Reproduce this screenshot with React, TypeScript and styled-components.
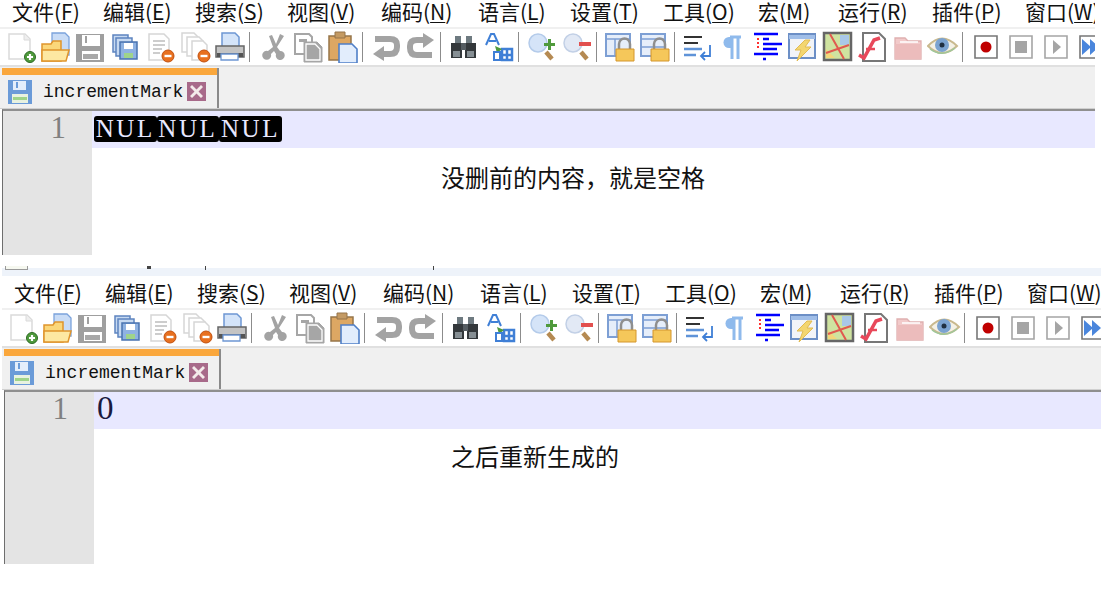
import React from "react";
import styled, { createGlobalStyle } from "styled-components";

const GlobalStyle = createGlobalStyle`
  html, body {
    margin: 0;
    padding: 0;
    background: #ffffff;
  }
  #root {
    width: 1101px;
    height: 597px;
    overflow: hidden;
  }
`;

const Shot = styled.div<{ $left: number; $top: number; $width: number }>`
  width: ${(p) => p.$width}px;
  margin-left: ${(p) => p.$left}px;
  margin-top: ${(p) => p.$top}px;
`;

const MenuBar = styled.div`
  display: flex;
  box-sizing: border-box;
  height: 27px;
  padding: 0 0 4px 12px;
  align-items: center;
  white-space: nowrap;
  overflow-x: clip;
  background: #ffffff;
  font-family: "Noto Sans CJK SC", "Liberation Sans", sans-serif;
  font-size: 21px;
  line-height: 25px;
  color: #111111;
`;

const MenuItem = styled.span<{ $width: number }>`
  flex: none;
  width: ${(p) => p.$width}px;

  u {
    text-underline-offset: 2px;
    text-decoration-thickness: 1px;
  }
`;

const Toolbar = styled.div`
  display: flex;
  align-items: center;
  height: 36px;
  padding-left: 2px;
  overflow: hidden;
  border-top: 2px solid #f0f0f0;
  background: #ffffff;
`;

const ToolSlot = styled.span`
  flex: none;
  width: 35px;
  height: 30px;
  display: flex;
  align-items: center;
  justify-content: center;
`;

const ToolSep = styled.span`
  flex: none;
  width: 1px;
  height: 30px;
  margin: 0 5px 0 2px;
  background: #8c8c8c;
`;

const TabBar = styled.div`
  display: flex;
  height: 44px;
  background: #f0f0f0;
  border-top: 2px solid #e0e0e0;
  border-bottom: 1px solid #d0d0d0;
  box-sizing: border-box;
  padding-left: 2px;
  padding-top: 1px;
`;

const Tab = styled.div`
  width: 215px;
  border-right: 2px solid #8a8a8a;
  background: #f0f0f0;
`;

const TabStripe = styled.div`
  height: 7px;
  background: #faa73c;
`;

const TabBody = styled.div`
  display: flex;
  align-items: center;
  height: 33px;
  padding-left: 6px;
`;

const TabLabel = styled.span`
  margin-left: 11px;
  width: 144px;
  font-family: "Liberation Mono", monospace;
  font-size: 18px;
  color: #111111;
  white-space: nowrap;
`;

const Editor = styled.div<{ $height: number }>`
  display: flex;
  height: ${(p) => p.$height}px;
  margin-left: 2px;
  box-sizing: border-box;
  border-top: 2px solid #8f8f8f;
  border-left: 1px solid #6e6e6e;
  background: #ffffff;
`;

const Gutter = styled.div`
  flex: none;
  box-sizing: border-box;
  width: 89px;
  padding: 0 26px 0 0;
  text-align: right;
  background: #e4e4e4;
  color: #808080;
  font-family: "Liberation Serif", serif;
  font-size: 31px;
  line-height: 34px;
`;

const Content = styled.div`
  flex: 1;
  min-width: 0;
  display: flex;
  flex-direction: column;
`;

const CurrentLine = styled.div`
  display: flex;
  align-items: center;
  height: 37px;
  padding-left: 2px;
  background: #e8e8ff;
`;

const NulChip = styled.span`
  box-sizing: border-box;
  width: 62.6px;
  height: 26px;
  margin-top: -2px;
  border-radius: 3px;
  background: #000000;
  color: #e8e8ff;
  font-family: "Liberation Serif", serif;
  font-size: 25px;
  letter-spacing: 2.6px;
  line-height: 25px;
  text-align: center;
`;

const Digit = styled.span`
  margin: -5px 0 0 1px;
  font-family: "Liberation Serif", serif;
  font-size: 33px;
  line-height: 34px;
  color: #1a1a40;
`;

const Caption = styled.div<{ $indent: number; $gap: number }>`
  margin-top: ${(p) => p.$gap}px;
  padding-left: ${(p) => p.$indent}px;
  font-family: "Noto Sans CJK SC", "Liberation Sans", sans-serif;
  font-size: 24px;
  line-height: 34px;
  color: #111111;
  white-space: nowrap;
`;

const Band = styled.div`
  margin: 13px 0 0 2px;
  height: 8px;
  background: #eef3fa;
`;

const Scrap = styled.svg`
  display: block;
  overflow: visible;
`;

const Ico = ({ children }: { children: React.ReactNode }) => (
  <svg width="32" height="32" viewBox="0 0 32 32">
    {children}
  </svg>
);

const icons: Record<string, React.ReactNode> = {
  new: (
    <>
      <path d="M5 3h16l5 5v20H5z" fill="#fff" stroke="#dadada" strokeWidth="1.5" />
      <path d="M20 3v6h6" fill="#eee" stroke="#dadada" />
      <circle cx="26" cy="26" r="5.500" fill="#4f9a3c" stroke="#2e6b25" />
      <path d="M26 23v6M23 26h6" stroke="#fff" strokeWidth="2.2" />
    </>
  ),
  open: (
    <>
      <path d="M13 2h13l4 4v18H13z" fill="#c9dcf6" stroke="#7ba3dc" strokeWidth="1.3" />
      <path d="M3 13h9l2-3h8v20H3z" fill="#fbd77a" stroke="#e0952c" strokeWidth="1.5" />
      <path d="M3 19h27l-3 11H3z" fill="#fde8a2" stroke="#e0952c" strokeWidth="1.5" />
    </>
  ),
  save: (
    <>
      <path d="M2 3h28v28H2z" fill="#9f9f9f" />
      <path d="M8 4h18v11H8z" fill="#ffffff" />
      <path d="M11 5h2v7h-2z" fill="#9f9f9f" />
      <path d="M8 20h18v9H8z" fill="#ffffff" />
      <path d="M9 23h15v5H9z" fill="#a8a8a8" />
    </>
  ),
  saveall: (
    <>
      <path d="M4 4h15v17H4z" fill="#c6d9f1" stroke="#5d84c0" strokeWidth="1.5" />
      <path d="M7 7h16v18H7z" fill="#c6d9f1" stroke="#5d84c0" strokeWidth="1.5" />
      <path d="M11 11h17v17H11z" fill="#8fb2e2" stroke="#4a73b0" strokeWidth="1.5" />
      <path d="M15 12h9v6h-9z" fill="#fff" />
      <path d="M15 22h9v5h-9z" fill="#9fd48a" />
    </>
  ),
  close: (
    <>
      <path d="M5 3h15l5 5v21H5z" fill="#fff" stroke="#d6d6d6" strokeWidth="1.5" />
      <path d="M9 10h12M9 14h12M9 18h9M9 22h7" stroke="#bdbdbd" strokeWidth="1.5" />
      <circle cx="24" cy="25" r="6" fill="#e8701f" stroke="#c2500e" />
      <path d="M20.500 25h7" stroke="#fff" strokeWidth="2.400" />
    </>
  ),
  closeall: (
    <>
      <path d="M3 2h12l4 4v15H3z" fill="#fff" stroke="#d6d6d6" strokeWidth="1.5" />
      <path d="M8 6h12l4 4v15H8z" fill="#fff" stroke="#d6d6d6" strokeWidth="1.5" />
      <path d="M13 10h11l4 4v15H13z" fill="#fff" stroke="#d6d6d6" strokeWidth="1.5" />
      <circle cx="25" cy="25" r="6" fill="#e8701f" stroke="#c2500e" />
      <path d="M21.500 25h7" stroke="#fff" strokeWidth="2.400" />
    </>
  ),
  print: (
    <>
      <path d="M8 2h13l4 4v11H8z" fill="#d4e4f9" stroke="#6d97d3" strokeWidth="1.5" />
      <path d="M2 15h28v11H2z" fill="#c4c4c4" stroke="#666" strokeWidth="1.5" />
      <path d="M3 22h26v4H3z" fill="#555555" />
      <path d="M7 23h17v6H7z" fill="#fff" stroke="#6d97d3" strokeWidth="1.3" />
    </>
  ),
  cut: (
    <path
      d="M23 3l4 2-7 11 3 4a4.500 4.500 0 1 1-4 3l-2-3-3 3a4.500 4.500 0 1 1-3-3l5-4-4-11 3-1 4 9z"
      fill="#a3a3a3"
    />
  ),
  copy: (
    <>
      <path d="M3 3h14l3 3v17H3z" fill="#fff" stroke="#a6a6a6" strokeWidth="2" />
      <path d="M7 8h8v3H7z" fill="#a6a6a6" />
      <path d="M12 11h13l5 5v15H12z" fill="#a6a6a6" stroke="#a6a6a6" />
      <path d="M14 13h9l5 5v11H14z" fill="#a6a6a6" stroke="#fff" strokeWidth="1.3" />
    </>
  ),
  paste: (
    <>
      <path d="M2 5h22v24H2z" fill="#dda763" stroke="#96754a" strokeWidth="1.5" />
      <path d="M8 1h10v6H8z" fill="#c49a63" stroke="#96754a" />
      <path d="M12 13h13l5 5v14H12z" fill="#e2edfc" stroke="#4f7fc7" strokeWidth="1.6" />
    </>
  ),
  undo: (
    <>
      <path d="M5 8h15q7 0 7 6v2q0 7-7 7h-8" fill="none" stroke="#a3a3a3" strokeWidth="6" />
      <path d="M14 15L3 23l11 7z" fill="#a3a3a3" />
    </>
  ),
  redo: (
    <>
      <path d="M20 9h-8q-7 0-7 6v2q0 7 7 7h15" fill="none" stroke="#a3a3a3" strokeWidth="6" />
      <path d="M18 2l11 7-11 8z" fill="#a3a3a3" />
    </>
  ),
  find: (
    <>
      <path d="M7 5h6v7H7zM18 5h6v7h-6z" fill="#6e7a80" />
      <path d="M3 12h11v15H3zM17 12h11v15H17z" fill="#33383b" />
      <path d="M13 12h5v7h-5z" fill="#555d62" />
      <path d="M5 20h7v6H5zM19 20h7v6h-7z" fill="#868f94" />
    </>
  ),
  replace: (
    <>
      <path d="M3 14L8 3h3l5 11M6 10h7" fill="none" stroke="#3f7fd6" strokeWidth="2" />
      <path d="M19 18h10v11H19zM19 24h10M24 18v11" fill="none" stroke="#3f7fd6" strokeWidth="2.500" />
      <path d="M12 15l7 3-5 4z" fill="#4f9a3c" />
      <path d="M11 21h6v8h-6z" fill="none" stroke="#3f7fd6" strokeWidth="2" />
    </>
  ),
  zoomin: (
    <>
      <circle cx="12" cy="12" r="9" fill="#d5e4f8" stroke="#b4cbea" strokeWidth="1.5" />
      <path d="M20 21l6 7" stroke="#b58a52" strokeWidth="4.500" />
      <path d="M18 12h4V8h3v4h4v3h-4v4h-3v-4h-4z" fill="#4f9a3c" />
    </>
  ),
  zoomout: (
    <>
      <circle cx="12" cy="12" r="9" fill="#e2e9f5" stroke="#c2d0e6" strokeWidth="1.5" />
      <path d="M20 21l6 7" stroke="#b58a52" strokeWidth="4.500" />
      <path d="M18 11h12v4H18z" fill="#e2504f" />
    </>
  ),
  lock1: (
    <>
      <path d="M2 3h24v22H2z" fill="#e6eefa" stroke="#7d9fd4" strokeWidth="2" />
      <path d="M2 8h24M11 8v17" stroke="#7d9fd4" strokeWidth="1.5" />
      <path d="M15 18v-5a5 5 0 0 1 11 0v5" fill="none" stroke="#8f8f8f" strokeWidth="2.500" />
      <path d="M12 18h18v12H12z" fill="#f5c75a" stroke="#d4962c" />
    </>
  ),
  lock2: (
    <>
      <path d="M2 3h24v22H2z" fill="#e6eefa" stroke="#7d9fd4" strokeWidth="2" />
      <path d="M2 8h24M2 16h24" stroke="#7d9fd4" strokeWidth="1.5" />
      <path d="M15 18v-5a5 5 0 0 1 11 0v5" fill="none" stroke="#8f8f8f" strokeWidth="2.500" />
      <path d="M12 18h18v12H12z" fill="#f5c75a" stroke="#d4962c" />
    </>
  ),
  wrap: (
    <>
      <path d="M2 6h18M2 12h14" stroke="#333" strokeWidth="2" />
      <path d="M2 18h18M2 24h12" stroke="#5f93d8" strokeWidth="2.500" />
      <path d="M28 14v11H19m4-4l-4 4 4 4" fill="none" stroke="#3f7fd6" strokeWidth="1.800" />
    </>
  ),
  para: (
    <>
      <path d="M15 6h-3a5.500 5.500 0 0 0 0 11h3z" fill="#8fbaec" />
      <path d="M15 6v22M21 6v22M13 6h11" stroke="#8fbaec" strokeWidth="3" />
    </>
  ),
  indent: (
    <>
      <path d="M2 3h24M11 8h6M11 13h19M11 18h14M2 23h24M11 28h3" stroke="#0000ff" strokeWidth="2.300" />
      <path d="M6 7v11" stroke="#ff3030" strokeWidth="2" strokeDasharray="2 2" />
    </>
  ),
  light: (
    <>
      <path d="M2 3h26v24H2z" fill="#f2f4f8" stroke="#6c8fc6" strokeWidth="2" />
      <path d="M2 4h26v4H2z" fill="#a0bee8" />
      <path d="M18 9L8 19h6l-4 11 14-14h-6l5-7z" fill="#f3d670" stroke="#e2bb52" />
    </>
  ),
  map: (
    <>
      <path d="M2 2h27v27H2z" fill="#cfe3a0" stroke="#666" strokeWidth="2.500" />
      <path d="M18 4h9v10h-9z" fill="#a9c8e8" />
      <path d="M4 18l9 9H4z" fill="#f3d77a" />
      <path d="M8 3l14 25M4 22l23-8" stroke="#e05a4f" strokeWidth="2" />
    </>
  ),
  func: (
    <>
      <path d="M6 2h16l6 6v22H6z" fill="#fff" stroke="#777" strokeWidth="2" />
      <path d="M2 24l5 3 10-18 6-2" fill="none" stroke="#e8485a" strokeWidth="3.500" />
      <path d="M9 18h9" stroke="#e8485a" strokeWidth="2.500" />
    </>
  ),
  folder: (
    <>
      <path d="M3 7h10l3 3h13v18H3z" fill="#f2caca" stroke="#dfb0b0" strokeWidth="1.300" />
      <path d="M3 13h26v15H3z" fill="#ecbcbc" />
      <path d="M8 11h18" stroke="#fff" strokeWidth="1.500" />
    </>
  ),
  eye: (
    <>
      <path d="M1 15Q15 0 30 15 15 29 1 15z" fill="#f4f1e6" stroke="#c9b98e" strokeWidth="2" />
      <circle cx="15" cy="14" r="7" fill="#7ba3d0" />
      <circle cx="15" cy="14" r="2.500" fill="#1f2f40" />
      <path d="M3 18Q15 27 28 17" fill="none" stroke="#9ec79a" strokeWidth="1.500" />
    </>
  ),
  rec: (
    <>
      <path d="M5 5h22v22H5z" fill="#fff" stroke="#777" strokeWidth="1.600" />
      <circle cx="16" cy="16" r="5.500" fill="#c00000" />
    </>
  ),
  stop: (
    <>
      <path d="M5 5h22v22H5z" fill="#fff" stroke="#a5a5a5" strokeWidth="1.600" />
      <path d="M10 10h12v12H10z" fill="#a5a5a5" />
    </>
  ),
  play: (
    <>
      <path d="M5 5h22v22H5z" fill="#fff" stroke="#a5a5a5" strokeWidth="1.600" />
      <path d="M13 9l8 7-8 7z" fill="#a5a5a5" />
    </>
  ),
  ff: (
    <>
      <path d="M5 5h22v22H5z" fill="#fff" stroke="#777" strokeWidth="1.600" />
      <path d="M7 8l9 8-9 8zM15 8l9 8-9 8z" fill="#4a86dc" />
    </>
  ),
};

const toolbarLayout: string[][] = [
  ["new", "open", "save", "saveall", "close", "closeall", "print"],
  ["cut", "copy", "paste"],
  ["undo", "redo"],
  ["find", "replace"],
  ["zoomin", "zoomout"],
  ["lock1", "lock2"],
  ["wrap", "para", "indent", "light", "map", "func", "folder", "eye"],
  ["rec", "stop", "play", "ff"],
];

const menus: { label: string; key: string; width: number }[] = [
  { label: "文件", key: "F", width: 91 },
  { label: "编辑", key: "E", width: 92 },
  { label: "搜索", key: "S", width: 92 },
  { label: "视图", key: "V", width: 94 },
  { label: "编码", key: "N", width: 97 },
  { label: "语言", key: "L", width: 92 },
  { label: "设置", key: "T", width: 93 },
  { label: "工具", key: "O", width: 95 },
  { label: "宏", key: "M", width: 80 },
  { label: "运行", key: "R", width: 94 },
  { label: "插件", key: "P", width: 93 },
  { label: "窗口", key: "W", width: 80 },
];

const Menu = () => (
  <MenuBar>
    {menus.map((m) => (
      <MenuItem key={m.key} $width={m.width}>
        {m.label}(<u>{m.key}</u>)
      </MenuItem>
    ))}
  </MenuBar>
);

const Tools = () => (
  <Toolbar>
    {toolbarLayout.map((group, i) => (
      <React.Fragment key={i}>
        {i > 0 && <ToolSep />}
        {group.map((name) => (
          <ToolSlot key={name}>
            <Ico>{icons[name]}</Ico>
          </ToolSlot>
        ))}
      </React.Fragment>
    ))}
  </Toolbar>
);

const FileTab = () => (
  <TabBar>
    <Tab>
      <TabStripe />
      <TabBody>
        <svg width="24" height="24" viewBox="0 0 24 24">
          <path d="M0 0h24v24H0z" fill="#6b9bd8" />
          <path d="M5 1h13v9H5z" fill="#e4eefb" />
          <path d="M8 2h2v6H8z" fill="#6b9bd8" />
          <path d="M4 14h16v9H4z" fill="#e8f2e0" />
          <path d="M5 17h14v3H5z" fill="#9fd48a" />
        </svg>
        <TabLabel>incrementMark</TabLabel>
        <svg width="19" height="19" viewBox="0 0 19 19">
          <path d="M0 0h19v19H0z" fill="#a86a8a" />
          <path d="M5 3l4.500 4.500L14 3l2 2-4.500 4.500L16 14l-2 2-4.500-4.500L5 16l-2-2 4.500-4.500L3 5z" fill="#f4eaea" />
        </svg>
      </TabBody>
    </Tab>
  </TabBar>
);

export default function App() {
  return (
    <>
      <GlobalStyle />
      <Shot $left={0} $top={0} $width={1095}>
        <Menu />
        <Tools />
        <FileTab />
        <Editor $height={146}>
          <Gutter>1</Gutter>
          <Content>
            <CurrentLine>
              <NulChip>NUL</NulChip>
              <NulChip>NUL</NulChip>
              <NulChip>NUL</NulChip>
            </CurrentLine>
            <Caption $indent={349} $gap={12}>没删前的内容，就是空格</Caption>
          </Content>
        </Editor>
      </Shot>
      <Band>
        <Scrap width="440" height="8" viewBox="0 0 440 8">
          <path d="M3-2h1v4H3zM25-2h1v4h-1z" fill="#9a9a9a" />
          <path d="M4-2h21v3H4z" fill="#f6f8f0" />
          <path d="M3 1h23v1H3z" fill="#9a9a9a" />
          <path d="M145-2h4v3h-4zM203-2h1v4h-1zM431-2h1v4h-1z" fill="#444" />
        </Scrap>
      </Band>
      <Shot $left={2} $top={5} $width={1099}>
        <Menu />
        <Tools />
        <FileTab />
        <Editor $height={174}>
          <Gutter>1</Gutter>
          <Content>
            <CurrentLine>
              <Digit>0</Digit>
            </CurrentLine>
            <Caption $indent={357} $gap={10}>之后重新生成的</Caption>
          </Content>
        </Editor>
      </Shot>
    </>
  );
}
